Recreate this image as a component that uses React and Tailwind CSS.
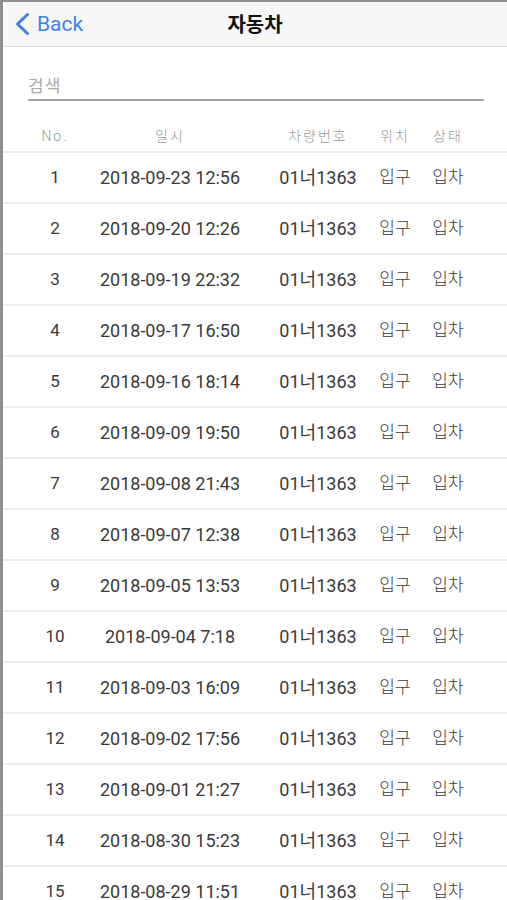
const ROWS = [
  ["1", "2018-09-23 12:56"],
  ["2", "2018-09-20 12:26"],
  ["3", "2018-09-19 22:32"],
  ["4", "2018-09-17 16:50"],
  ["5", "2018-09-16 18:14"],
  ["6", "2018-09-09 19:50"],
  ["7", "2018-09-08 21:43"],
  ["8", "2018-09-07 12:38"],
  ["9", "2018-09-05 13:53"],
  ["10", "2018-09-04 7:18"],
  ["11", "2018-09-03 16:09"],
  ["12", "2018-09-02 17:56"],
  ["13", "2018-09-01 21:27"],
  ["14", "2018-08-30 15:23"],
  ["15", "2018-08-29 11:51"],
];

function Cells({ cells, className }) {
  const [no, date, plate, loc, state] = cells;
  return (
    <div className={`flex items-center ${className}`}>
      <div className="w-[104px] shrink-0 flex justify-center whitespace-nowrap">{no}</div>
      <div className="w-[126px] shrink-0 flex justify-center whitespace-nowrap">{date}</div>
      <div className="w-[80px] ml-[45px] shrink-0 flex justify-center whitespace-nowrap">{plate}</div>
      <div className="w-[50px] ml-[12px] shrink-0 flex justify-center whitespace-nowrap">{loc}</div>
      <div className="w-[50px] ml-[3px] shrink-0 flex justify-center whitespace-nowrap">{state}</div>
    </div>
  );
}

export default function App() {
  return (
    <div className="min-h-screen bg-white border-l-[3px] border-t-2 border-[#8f8f8f] font-['Roboto','Noto_Sans_CJK_KR',sans-serif] text-[#3a3a3a]">
      {/* Nav bar */}
      <div className="h-[45px] bg-[#f7f7f7] border-b border-[#dcdcdc] grid grid-cols-[1fr_auto_1fr] items-center">
        <div className="flex items-center pl-[11px] text-[#3d82e6]">
          <svg width="17" height="24" viewBox="0 0 17 24" fill="none">
            <path d="M13.5 2.5 L3.5 12 L13.5 21.5" stroke="currentColor" strokeWidth="3" strokeLinecap="round" strokeLinejoin="round" />
          </svg>
          <span className="ml-[6px] text-[21px] leading-none">Back</span>
        </div>
        <h1 className="text-[20px] font-bold text-[#111] font-['Noto_Sans_CJK_KR',sans-serif] leading-none">자동차</h1>
        <div />
      </div>

      {/* Search */}
      <div className="ml-[25px] mr-[23px] mt-[23px] h-[31px] border-b-2 border-[#a5a5a5] flex items-center">
        <input
          placeholder="검색"
          className="w-full bg-transparent outline-none text-[17px] tracking-[1px] placeholder:text-[#aaa] font-['Noto_Sans_CJK_KR',sans-serif]"
        />
      </div>

      {/* Table header */}
      <Cells
        className="mt-[20px] h-[32px] border-b-2 border-[#ececec] text-[14px] tracking-[2px] text-[#999] font-light"
        cells={["No.", "일시", "차량번호", "위치", "상태"]}
      />

      {/* Rows */}
      {ROWS.map(([no, date]) => (
        <Cells
          key={no}
          className="h-[51px] border-b-2 border-[#ececec] text-[18px]"
          cells={[
            <span className="text-[17px]">{no}</span>,
            date,
            "01너1363",
            <span className="text-[17px] font-light">입구</span>,
            <span className="text-[17px] font-light">입차</span>,
          ]}
        />
      ))}
    </div>
  );
}
